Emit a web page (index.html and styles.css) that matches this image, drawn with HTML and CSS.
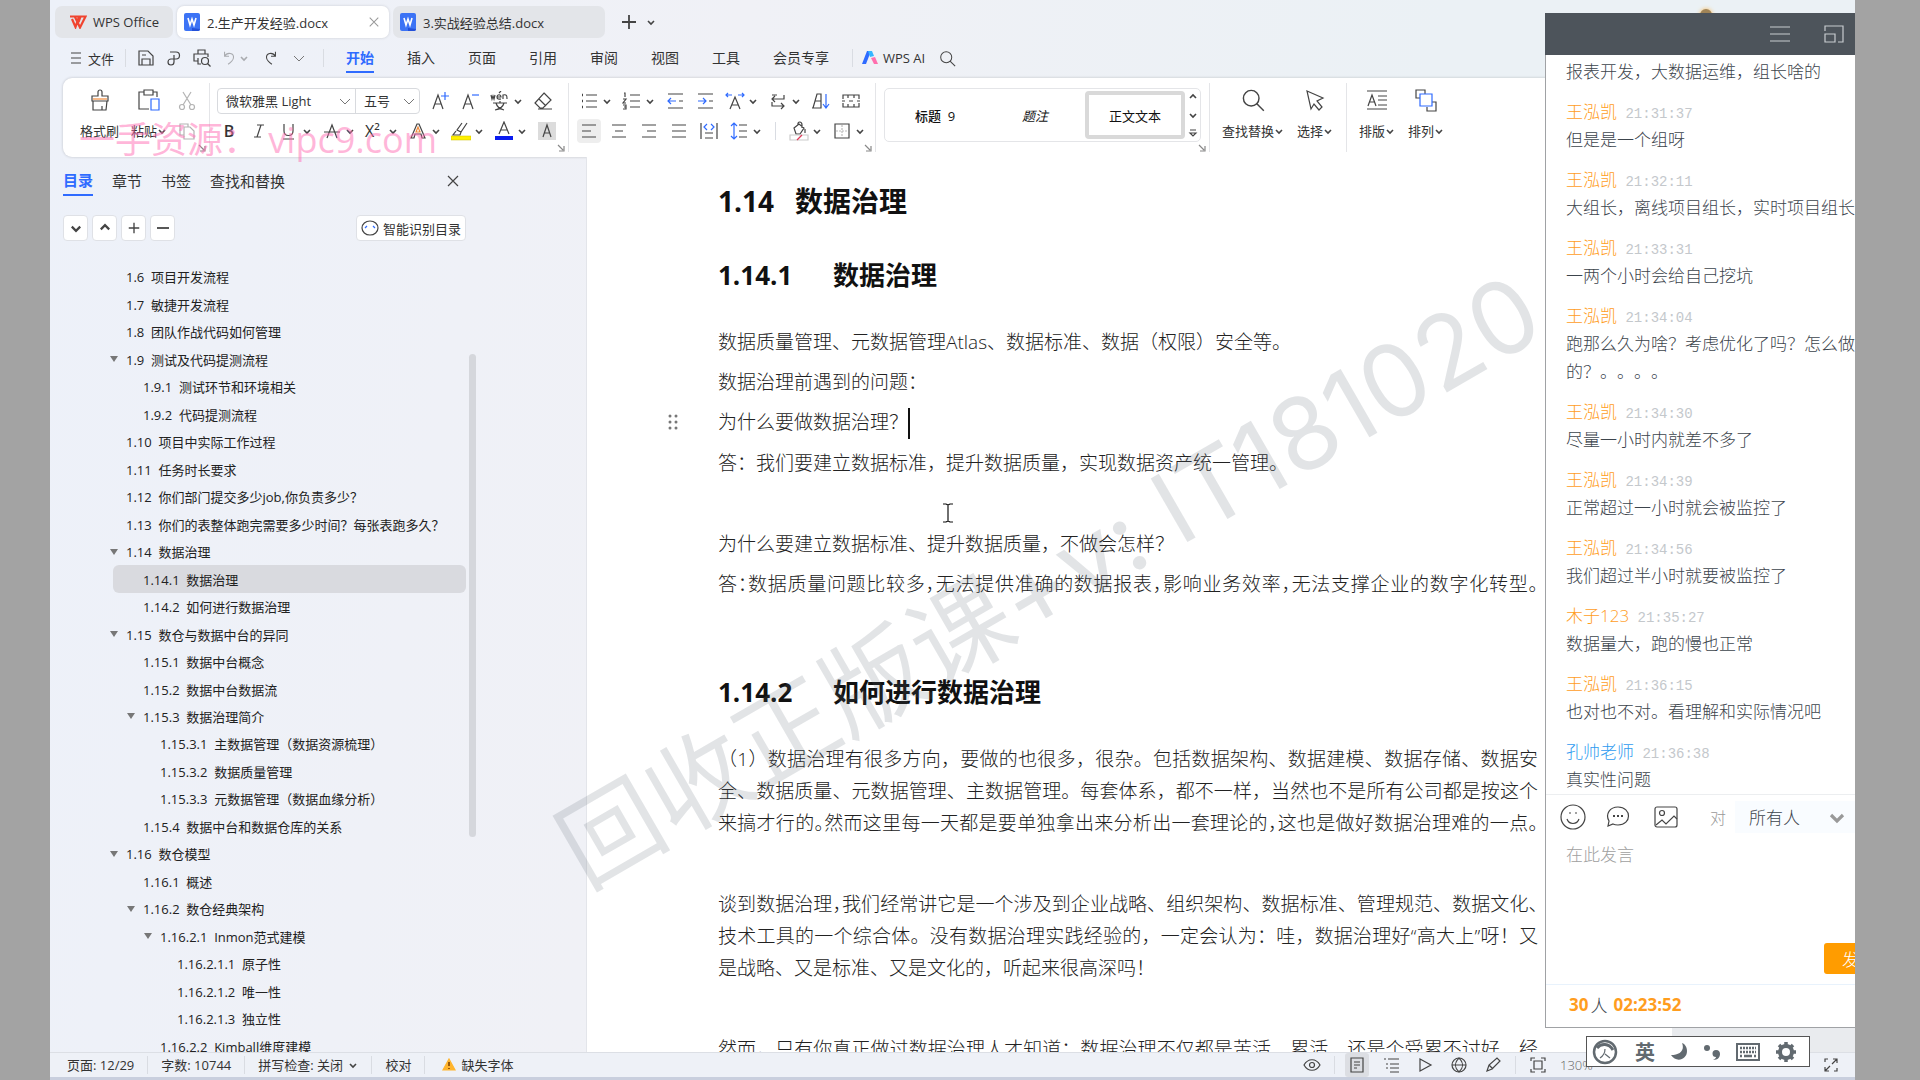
FILE: index.html
```html
<!DOCTYPE html>
<html lang="zh-CN">
<head>
    <meta charset="UTF-8">
    <meta name="viewport" content="width=device-width, initial-scale=1.0">
    <title>2.生产开发经验.docx - WPS Office</title>
    <link rel="stylesheet" href="styles.css">
</head>
<body>
    <svg class="sprite" aria-hidden="true">
        <symbol id="caret" viewBox="0 0 10 10"><path d="M2 4l3 3 3-3" stroke-width="1.6"/></symbol>
        <symbol id="caret-thin" viewBox="0 0 12 12"><path d="M1 4l5 5 5-5" stroke="#777" stroke-width="1"/></symbol>
        <symbol id="corner" viewBox="0 0 8 8"><path d="M1 1l5 5M7 2v5H2" stroke="#888"/></symbol>
        <symbol id="word" viewBox="0 0 18 18"><path d="M3 0h12a2 2 0 0 1 2 2v14a2 2 0 0 1-2 2H3a2 2 0 0 1-2-2V2a2 2 0 0 1 2-2z" fill="#3c73f5" stroke="none"/><path d="M9 18h6a2 2 0 0 0 2-2l-8-1z" fill="#2450d8" stroke="none"/><path d="M5 5l2 7 2-6 2 6 2-7" stroke="#fff" stroke-width="1.6"/></symbol>
        <symbol id="close" viewBox="0 0 14 14"><path d="M2 2l10 10M12 2L2 12"/></symbol>
        <symbol id="plus" viewBox="0 0 16 16"><path d="M8 1v14M1 8h14" stroke-width="1.8"/></symbol>
        <symbol id="search" viewBox="0 0 20 20"><circle cx="8.500" cy="8.500" r="6.500"/><path d="M13 13l6 6"/></symbol>
        <symbol id="lines-left" viewBox="0 0 20 20"><path d="M3 4h14M3 10h9M3 16h14"/></symbol>
        <symbol id="lines-center" viewBox="0 0 20 20"><path d="M3 4h14M6 10h8M3 16h14"/></symbol>
        <symbol id="lines-right" viewBox="0 0 20 20"><path d="M3 4h14M8 10h9M3 16h14"/></symbol>
        <symbol id="lines-full" viewBox="0 0 20 20"><path d="M3 4h14M3 10h14M3 16h14"/></symbol>
    </svg>

    <div class="screen">
        <header class="tabs">
            <button class="tab home">
                <svg width="18" height="14" viewBox="0 0 18 14"><path d="M1 1.500h9L6.500 12 3 4M6 2l5 10.500L16.500 1.500h-5L9.500 7" stroke="#f0442f" stroke-width="2.200"/></svg>
                <span>WPS Office</span>
            </button>
            <button class="tab active">
                <svg width="18" height="18"><use href="#word"/></svg>
                <span>2.生产开发经验.docx</span>
                <svg class="tab-close" width="12" height="12"><use href="#close"/></svg>
            </button>
            <button class="tab">
                <svg width="18" height="18"><use href="#word"/></svg>
                <span>3.实战经验总结.docx</span>
            </button>
            <button class="new-tab" aria-label="新建"><svg width="16" height="16"><use href="#plus"/></svg></button>
            <button class="new-tab" aria-label="更多"><svg width="10" height="10"><use href="#caret"/></svg></button>
        </header>

        <nav class="menubar">
            <button class="file"><svg width="12" height="14" viewBox="0 0 12 14"><path d="M1 2h10M1 7h10M1 12h10"/></svg>文件</button>
            <i class="sep"></i>
            <div class="quick">
                <button aria-label="保存"><svg width="18" height="18" viewBox="0 0 18 18"><path d="M2 2h9l5 5v9H2zM5 16v-6h8v6M5 6h4"/></svg></button>
                <button aria-label="输出"><svg width="18" height="18" viewBox="0 0 18 18"><path d="M5 3h6a3 3 0 0 1 0 7H6a3 3 0 1 0 3 3V6"/></svg></button>
                <button aria-label="打印预览"><svg width="18" height="18" viewBox="0 0 18 18"><path d="M5 5V1h7v4M5 12H1V5h14v3M5 9v6h3"/><circle cx="12" cy="12" r="3.500"/><path d="M14.500 14.500l3 3"/></svg></button>
                <button class="undo" aria-label="撤销"><svg width="16" height="16" viewBox="0 0 18 18"><path d="M4 2v5h5M4 7c3-5 11-4 10 2-.5 3-3 5-6 7"/></svg><svg width="10" height="10"><use href="#caret"/></svg></button>
                <button aria-label="恢复"><svg width="16" height="16" viewBox="0 0 18 18"><path d="M14 2v5H9M14 7C11 2 3 3 4 9c.5 3 3 5 6 7"/></svg></button>
                <button aria-label="更多"><svg width="12" height="12"><use href="#caret-thin"/></svg></button>
            </div>
            <i class="sep"></i>
            <div class="menu">
                <a class="current" href="#">开始</a>
                <a href="#">插入</a>
                <a href="#">页面</a>
                <a href="#">引用</a>
                <a href="#">审阅</a>
                <a href="#">视图</a>
                <a href="#">工具</a>
                <a href="#">会员专享</a>
            </div>
            <i class="sep"></i>
            <a class="ai" href="#">
                <svg width="16" height="14" viewBox="0 0 16 14"><path d="M5 0h4L4 13H0z" fill="#2f6bff" stroke="none"/><path d="M6 0h4l2 5-4 1z" fill="#35b6ff" stroke="none"/><path d="M9 7l4-1 3 7h-4z" fill="#ff6fae" stroke="none"/></svg>
                WPS AI
            </a>
            <button class="find" aria-label="搜索"><svg width="17" height="17"><use href="#search"/></svg></button>
        </nav>

        <section class="ribbon">
            <div class="group clipboard">
                <button class="big">
                    <svg width="22" height="24" viewBox="0 0 22 24"><path d="M9 8V4a2 2 0 0 1 4 0v4h6v5H3V8zM4 13v9h13l1-9M13 22v-4"/><path d="M4 11h14" stroke="#f08a3c"/></svg>
                    格式刷
                </button>
                <button class="big">
                    <svg width="22" height="24" viewBox="0 0 22 24"><path d="M6 4H1v17h10M15 4h4v5M6 2h9v5H6z"/><path d="M13 11h8v11h-8z" stroke="#2f6bff"/></svg>
                    <span>粘贴<svg width="10" height="10"><use href="#caret"/></svg></span>
                </button>
                <div class="stack">
                    <button class="tool muted" aria-label="剪切"><svg width="20" height="20" viewBox="0 0 20 20"><circle cx="5" cy="16" r="2.500"/><circle cx="15" cy="16" r="2.500"/><path d="M6 14l8-13M14 14L6 1"/></svg></button>
                    <button class="tool muted" aria-label="复制"><svg width="20" height="20" viewBox="0 0 20 20"><path d="M7 14H3V3h8v3M7 6h6l4 4v8H7z"/></svg></button>
                </div>
                <svg class="corner" width="8" height="8"><use href="#corner"/></svg>
            </div>

            <div class="group font">
                <div class="row">
                    <div class="combo">
                        <label class="pick family"><select aria-label="字体"><option>微软雅黑 Light</option></select><svg width="12" height="12"><use href="#caret-thin"/></svg></label>
                        <label class="pick size"><select aria-label="字号"><option>五号</option></select><svg width="12" height="12"><use href="#caret-thin"/></svg></label>
                    </div>
                    <button class="tool" aria-label="增大字号"><svg width="20" height="20" viewBox="0 0 20 20"><path d="M3 18L8 4l5 14M5 13h6"/><path d="M15 1v8M11 5h8" stroke="#2f6bff"/></svg></button>
                    <button class="tool" aria-label="减小字号"><svg width="20" height="20" viewBox="0 0 20 20"><path d="M3 18L8 4l5 14M5 13h6"/><path d="M12 4h7" stroke="#2f6bff"/></svg></button>
                    <button class="tool drop" aria-label="拼音指南"><svg width="20" height="20" viewBox="0 0 20 20"><path d="M1 4l1 4 1-3 1 3 1-4M7 6h4c0-3-4-3-4 0 0 3 3 2 4 2M9 2l2-2M13 8V4c4-1 4 1 4 4M3 12h14M10 10v2M6 12c1 4 4 6 8 7M14 12c-1 4-4 6-9 7"/></svg><svg class="c"><use href="#caret"/></svg></button>
                    <button class="tool" aria-label="清除格式"><svg width="20" height="20" viewBox="0 0 20 20"><path d="M11 2l7 7-8 8H7l-5-5zM6 8l7 7M5 18h14"/></svg></button>
                </div>
                <div class="row indent">
                    <button class="tool"><b>B</b></button>
                    <button class="tool" aria-label="斜体"><svg width="20" height="20" viewBox="0 0 20 20"><path d="M8 4h7M5 16h7M12 4L8 16"/></svg></button>
                    <button class="tool drop" aria-label="下划线"><svg width="20" height="20" viewBox="0 0 20 20"><path d="M5 3v7c0 6 9 6 9 0V3M4 18h11"/></svg><svg class="c"><use href="#caret"/></svg></button>
                    <button class="tool drop" aria-label="删除线"><svg width="20" height="20" viewBox="0 0 20 20"><path d="M5 17l5-13 5 13M2 11h16"/></svg><svg class="c"><use href="#caret"/></svg></button>
                    <button class="tool drop"><span>X²</span><svg class="c"><use href="#caret"/></svg></button>
                    <button class="tool drop" aria-label="文字效果"><svg width="20" height="20" viewBox="0 0 20 20"><path d="M3 17L9 3h2l6 14h-3l-1-4H7l-1 4z"/><path d="M8 11l2-5 2 5z" stroke="#f08a3c"/></svg><svg class="c"><use href="#caret"/></svg></button>
                    <button class="tool drop" aria-label="突出显示"><svg width="20" height="20" viewBox="0 0 20 20"><path d="M16 2l-6 9-4-2 5-7M5 10l-3 4h7l1-3"/><path d="M0 15h20v4H0z" fill="#fff000" stroke="#c9bd00" stroke-width=".5"/></svg><svg class="c"><use href="#caret"/></svg></button>
                    <button class="tool drop" aria-label="字体颜色"><svg width="20" height="20" viewBox="0 0 20 20"><path d="M5 13l5-12 5 12M7 9h6"/><path d="M1 15h18v4H1z" fill="#0a1cf0" stroke="none"/></svg><svg class="c"><use href="#caret"/></svg></button>
                    <button class="tool" aria-label="字符底纹"><svg width="20" height="20" viewBox="0 0 20 20"><path d="M1 1h18v18H1z" fill="#dcdcdc" stroke="none"/><path d="M6 16l4-12 4 12M7 12h6"/></svg></button>
                </div>
                <svg class="corner" width="8" height="8"><use href="#corner"/></svg>
            </div>

            <div class="group paragraph">
                <div class="row">
                    <button class="tool drop" aria-label="项目符号"><svg width="20" height="20" viewBox="0 0 20 20"><path d="M3 4h1M3 10h1M3 16h1" stroke-width="2.500"/><path d="M7 4h11M7 10h11M7 16h11"/></svg><svg class="c"><use href="#caret"/></svg></button>
                    <button class="tool drop" aria-label="编号"><svg width="20" height="20" viewBox="0 0 20 20"><path d="M2 2h1v4M1 8h3l-3 4h3M1 14h3v4H1M2 16h2M8 4h10M8 10h10M8 16h10"/></svg><svg class="c"><use href="#caret"/></svg></button>
                    <button class="tool" aria-label="减少缩进"><svg width="20" height="20" viewBox="0 0 20 20"><path d="M3 3h15M3 17h15M14 10h4"/><path d="M11 10H3M6 7l-3 3 3 3" stroke="#2f6bff"/></svg></button>
                    <button class="tool" aria-label="增加缩进"><svg width="20" height="20" viewBox="0 0 20 20"><path d="M3 3h15M3 17h15M14 10h4"/><path d="M3 10h8M8 7l3 3-3 3" stroke="#2f6bff"/></svg></button>
                    <button class="tool drop" aria-label="中文版式"><svg width="20" height="20" viewBox="0 0 20 20"><path d="M5 18l5-12 5 12M7 14h6"/><path d="M1 4h6M3 2L1 4l2 2M13 4h6M17 2l2 2-2 2" stroke="#2f6bff"/></svg><svg class="c"><use href="#caret"/></svg></button>
                    <button class="tool drop" aria-label="换行"><svg width="20" height="20" viewBox="0 0 20 20"><path d="M16 4v4H4M7 5L4 8l3 3M4 11v4h12M13 12l3 3-3 3M4 4h5"/></svg><svg class="c"><use href="#caret"/></svg></button>
                    <button class="tool" aria-label="排序"><svg width="20" height="20" viewBox="0 0 20 20"><path d="M2 17L6 3h4v14H1M4 10h6"/><path d="M15 3v14M12 13l3 4 3-4" stroke="#2f6bff"/></svg></button>
                    <button class="tool" aria-label="制表位"><svg width="20" height="20" viewBox="0 0 20 20"><path d="M2 8V4h16v4M2 12v4h16v-4M7 4v3M13 4v3M7 13v3M13 13v3M1 10h3M8 10h4M16 10h3"/></svg></button>
                </div>
                <div class="row">
                    <button class="tool on" aria-label="左对齐"><svg width="20" height="20"><use href="#lines-left"/></svg></button>
                    <button class="tool" aria-label="居中"><svg width="20" height="20"><use href="#lines-center"/></svg></button>
                    <button class="tool" aria-label="右对齐"><svg width="20" height="20"><use href="#lines-right"/></svg></button>
                    <button class="tool" aria-label="两端对齐"><svg width="20" height="20"><use href="#lines-full"/></svg></button>
                    <button class="tool" aria-label="分散对齐"><svg width="20" height="20" viewBox="0 0 20 20"><path d="M2 2v16M18 2v16M6 12h8M6 17h8"/><path d="M8 3L5 6l3 3M12 3l3 3-3 3" stroke="#2f6bff"/></svg></button>
                    <button class="tool drop" aria-label="行距"><svg width="20" height="20" viewBox="0 0 20 20"><path d="M10 4h8M10 10h8M10 16h8"/><path d="M5 2v16M2 5l3-3 3 3M2 15l3 3 3-3" stroke="#2f6bff"/></svg><svg class="c"><use href="#caret"/></svg></button>
                    <i class="sep"></i>
                    <button class="tool drop" aria-label="底纹"><svg width="20" height="20" viewBox="0 0 20 20"><path d="M5 7l5-4 5 4-4 6H7zM9 4c-1-4 4-4 4 0v3M16 8v4"/><path d="M1 14h18v5H1z" stroke="#ccc"/><path d="M8 19l5-5" stroke="#e03b5a"/></svg><svg class="c"><use href="#caret"/></svg></button>
                    <button class="tool drop" aria-label="边框"><svg width="20" height="20" viewBox="0 0 20 20"><path d="M3 3h14v14H3z"/><path d="M10 4v12M4 10h12" stroke="#bbb" stroke-dasharray="2 1"/></svg><svg class="c"><use href="#caret"/></svg></button>
                </div>
                <svg class="corner" width="8" height="8"><use href="#corner"/></svg>
            </div>

            <div class="group styles">
                <div class="gallery">
                    <button class="style heading">标题&nbsp; 9</button>
                    <button class="style caption">题注</button>
                    <button class="style selected">正文文本</button>
                    <div class="scroller">
                        <button aria-label="上"><svg class="flip" width="10" height="10"><use href="#caret"/></svg></button>
                        <button aria-label="下"><svg width="10" height="10"><use href="#caret"/></svg></button>
                        <button aria-label="展开"><svg width="10" height="10" viewBox="0 0 10 10"><path d="M2 2h6M2 5h6L5 8z"/></svg></button>
                    </div>
                </div>
                <svg class="corner" width="8" height="8"><use href="#corner"/></svg>
            </div>

            <div class="group edit">
                <button class="big"><svg width="24" height="24" viewBox="0 0 20 20"><use href="#search"/></svg><span>查找替换<svg width="10" height="10"><use href="#caret"/></svg></span></button>
                <button class="big"><svg width="24" height="24" viewBox="0 0 24 24"><path d="M4 3l16 7-6 3 5 6-3 3-5-6-3 5z"/></svg><span>选择<svg width="10" height="10"><use href="#caret"/></svg></span></button>
            </div>

            <div class="group arrange">
                <button class="big"><svg width="24" height="24" viewBox="0 0 24 24"><path d="M2 3h20M2 21h20M3 18L7 7l4 11M5 14h5M13 8h9M13 12h9M13 17h9"/></svg><span>排版<svg width="10" height="10"><use href="#caret"/></svg></span></button>
                <button class="big"><svg width="24" height="24" viewBox="0 0 24 24"><path d="M6 10H2V2h9v4M18 14h4v9h-9v-4"/><path d="M6 6h12v12H6z" stroke="#2f6bff"/></svg><span>排列<svg width="10" height="10"><use href="#caret"/></svg></span></button>
            </div>
        </section>

        <main class="workspace">
            <aside class="outline">
                <div class="outline-tabs">
                    <a class="current" href="#">目录</a>
                    <a href="#">章节</a>
                    <a href="#">书签</a>
                    <a href="#">查找和替换</a>
                    <button class="outline-close" aria-label="关闭"><svg width="14" height="14"><use href="#close"/></svg></button>
                </div>
                <div class="outline-tools">
                    <button class="square" aria-label="展开"><svg width="14" height="14"><use href="#caret"/></svg></button>
                    <button class="square" aria-label="收起"><svg class="flip" width="14" height="14"><use href="#caret"/></svg></button>
                    <button class="square" aria-label="增加"><svg width="12" height="12"><use href="#plus"/></svg></button>
                    <button class="square" aria-label="减少"><svg width="14" height="14" viewBox="0 0 14 14"><path d="M1 7h12" stroke-width="1.800"/></svg></button>
                    <button class="smart"><svg width="18" height="16" viewBox="0 0 18 16"><ellipse cx="9" cy="8" rx="8" ry="7"/><path d="M4 8l2-2M12 6l2 2" stroke="#2f6bff"/></svg>智能识别目录</button>
                </div>
                <ul class="tree">
                    <li>1.6&nbsp; 项目开发流程</li>
                    <li>1.7&nbsp; 敏捷开发流程</li>
                    <li>1.8&nbsp; 团队作战代码如何管理</li>
                    <li class="open">1.9&nbsp; 测试及代码提测流程</li>
                    <li class="l2">1.9.1&nbsp; 测试环节和环境相关</li>
                    <li class="l2">1.9.2&nbsp; 代码提测流程</li>
                    <li>1.10&nbsp; 项目中实际工作过程</li>
                    <li>1.11&nbsp; 任务时长要求</li>
                    <li>1.12&nbsp; 你们部门提交多少job,你负责多少？</li>
                    <li>1.13&nbsp; 你们的表整体跑完需要多少时间？每张表跑多久？</li>
                    <li class="open">1.14&nbsp; 数据治理</li>
                    <li class="l2 chosen">1.14.1&nbsp; 数据治理</li>
                    <li class="l2">1.14.2&nbsp; 如何进行数据治理</li>
                    <li class="open">1.15&nbsp; 数仓与数据中台的异同</li>
                    <li class="l2">1.15.1&nbsp; 数据中台概念</li>
                    <li class="l2">1.15.2&nbsp; 数据中台数据流</li>
                    <li class="l2 open">1.15.3&nbsp; 数据治理简介</li>
                    <li class="l3">1.15.3.1&nbsp; 主数据管理（数据资源梳理）</li>
                    <li class="l3">1.15.3.2&nbsp; 数据质量管理</li>
                    <li class="l3">1.15.3.3&nbsp; 元数据管理（数据血缘分析）</li>
                    <li class="l2">1.15.4&nbsp; 数据中台和数据仓库的关系</li>
                    <li class="open">1.16&nbsp; 数仓模型</li>
                    <li class="l2">1.16.1&nbsp; 概述</li>
                    <li class="l2 open">1.16.2&nbsp; 数仓经典架构</li>
                    <li class="l3 open">1.16.2.1&nbsp; Inmon范式建模</li>
                    <li class="l4">1.16.2.1.1&nbsp; 原子性</li>
                    <li class="l4">1.16.2.1.2&nbsp; 唯一性</li>
                    <li class="l4">1.16.2.1.3&nbsp; 独立性</li>
                    <li class="l3">1.16.2.2&nbsp; Kimball维度建模</li>
                </ul>
                <div class="scrollbar"></div>
            </aside>

            <article class="page">
                <h1><span class="no">1.14</span>数据治理</h1>
                <h2><span class="no">1.14.1</span>数据治理</h2>
                <p>数据质量管理、元数据管理Atlas、数据标准、数据（权限）安全等。</p>
                <p>数据治理前遇到的问题：</p>
                <p class="editing">
                    <svg class="handle" width="10" height="16" viewBox="0 0 10 16"><circle cx="2" cy="2" r="1.500"/><circle cx="8" cy="2" r="1.500"/><circle cx="2" cy="8" r="1.500"/><circle cx="8" cy="8" r="1.500"/><circle cx="2" cy="14" r="1.500"/><circle cx="8" cy="14" r="1.500"/></svg>
                    为什么要做数据治理？<i class="text-caret"></i>
                </p>
                <p>答：我们要建立数据标准，提升数据质量，实现数据资产统一管理。</p>
                <p class="blank"><svg class="ibeam" width="12" height="20" viewBox="0 0 12 20"><path d="M1 1h3l2 1 2-1h3M1 19h3l2-1 2 1h3M6 2v16" stroke="#111"/></svg></p>
                <p>为什么要建立数据标准、提升数据质量，不做会怎样？</p>
                <p><span class="full">答<span class="half">：</span>数据质量问题比较多<span class="half">，</span>无法提供准确的数据报表<span class="half">，</span>影响业务效率<span class="half">，</span>无法支撑企业的数字化转型<span class="half">。</span></span></p>
                <h2 class="later"><span class="no">1.14.2</span>如何进行数据治理</h2>
                <p>
                    <span class="full">（1）数据治理有很多方向，要做的也很多，很杂。包括数据架构、数据建模、数据存储、数据安</span>
                    <span class="full">全、数据质量、元数据管理、主数据管理。每套体系，都不一样，当然也不是所有公司都是按这个</span>
                    <span class="full">来搞才行的<span class="half">。</span>然而这里每一天都是要单独拿出来分析出一套理论的<span class="half">，</span>这也是做好数据治理难的一点<span class="half">。</span></span>
                </p>
                <p class="blank"></p>
                <p>
                    <span class="full">谈到数据治理<span class="half">，</span>我们经常讲它是一个涉及到企业战略、组织架构、数据标准、管理规范、数据文化<span class="half">、</span></span>
                    <span class="full">技术工具的一个综合体。没有数据治理实践经验的，一定会认为：哇，数据治理好“高大上”呀！又</span>
                    是战略、又是标准、又是文化的，听起来很高深吗！
                </p>
                <p class="blank"></p>
                <p><span class="full">然而，只有你真正做过数据治理人才知道：数据治理不仅都是苦活、累活、还是个受累不讨好、经</span></p>
            </article>
        </main>

        <footer class="statusbar">
            <span>页面: 12/29</span><i class="sep"></i>
            <span>字数: 10744</span><i class="sep"></i>
            <span>拼写检查: 关闭 <svg class="lang-caret" width="10" height="10"><use href="#caret"/></svg></span><i class="sep"></i>
            <span>校对</span><i class="sep"></i>
            <span class="warn"><svg width="14" height="13" viewBox="0 0 14 13"><path d="M7 1l6 11H1z" fill="#ffb52e" stroke="#ffb52e"/><path d="M7 4v4M7 10v1" stroke="#7a3d00" stroke-width="1.500"/></svg>缺失字体</span>
            <div class="views">
                <button aria-label="护眼"><svg width="18" height="18" viewBox="0 0 18 18"><path d="M1 9c4-7 12-7 16 0-4 7-12 7-16 0z"/><circle cx="9" cy="9" r="2.500"/></svg></button>
                <i class="sep"></i>
                <button class="on" aria-label="页面视图"><svg width="18" height="18" viewBox="0 0 18 18"><path d="M3 2h12v14H3zM6 6h6M6 9h6M6 12h3"/></svg></button>
                <button aria-label="大纲"><svg width="18" height="18" viewBox="0 0 18 18"><path d="M2 3h2M6 3h11M4 8h2M8 8h9M4 12h2M8 12h9M8 16h9"/></svg></button>
                <button aria-label="播放"><svg width="18" height="18" viewBox="0 0 18 18"><path d="M4 3l11 6-11 6z"/></svg></button>
                <button aria-label="网页"><svg width="18" height="18" viewBox="0 0 18 18"><circle cx="9" cy="9" r="7"/><path d="M2 9h14M9 2c-5 5-5 9 0 14M9 2c5 5 5 9 0 14"/></svg></button>
                <button aria-label="书写"><svg width="18" height="18" viewBox="0 0 18 18"><path d="M3 15l2-6 8-7 3 3-8 8zM5 9l4 4"/></svg></button>
                <i class="sep"></i>
                <button aria-label="适应"><svg width="18" height="18" viewBox="0 0 18 18"><path d="M2 5V2h4M12 2h4v3M16 13v3h-4M6 16H2v-3M5 5h8v8H5z"/></svg></button>
                <span class="zoom">130%</span>
                <button class="fullscreen" aria-label="全屏"><svg width="16" height="16" viewBox="0 0 16 16"><path d="M2 5V2h3M9 7l5-5M10 2h4v4M14 11v3h-3M7 9l-5 5M2 10v4h4"/></svg></button>
            </div>
        </footer>

        <div class="watermark">回收正版课+v: IT181020</div>
        <div class="stamp">一手资源： vipc9.com</div>

        <i class="glow"></i>
        <div class="backdrop"></div>
        <section class="chat">
            <header class="chat-head">
                <svg width="20" height="18" viewBox="0 0 20 18"><path d="M0 2h20M0 9h20M0 16h20"/></svg>
                <svg width="20" height="18" viewBox="0 0 20 18"><path d="M1 6V1h18v16h-5M1 9h10v8H1z"/></svg>
            </header>
            <div class="messages">
                <p>报表开发，大数据运维，组长啥的</p>
                <h3>王泓凯 <time>21:31:37</time></h3>
                <p>但是是一个组呀</p>
                <h3>王泓凯 <time>21:32:11</time></h3>
                <p>大组长，离线项目组长，实时项目组长</p>
                <h3>王泓凯 <time>21:33:31</time></h3>
                <p>一两个小时会给自己挖坑</p>
                <h3>王泓凯 <time>21:34:04</time></h3>
                <p>跑那么久为啥？考虑优化了吗？怎么做的？。。。。</p>
                <h3>王泓凯 <time>21:34:30</time></h3>
                <p>尽量一小时内就差不多了</p>
                <h3>王泓凯 <time>21:34:39</time></h3>
                <p>正常超过一小时就会被监控了</p>
                <h3>王泓凯 <time>21:34:56</time></h3>
                <p>我们超过半小时就要被监控了</p>
                <h3>木子123 <time>21:35:27</time></h3>
                <p>数据量大，跑的慢也正常</p>
                <h3>王泓凯 <time>21:36:15</time></h3>
                <p>也对也不对。看理解和实际情况吧</p>
                <h3 class="teacher">孔帅老师 <time>21:36:38</time></h3>
                <p>真实性问题</p>
            </div>
            <div class="chat-tools">
                <button aria-label="表情"><svg width="26" height="26" viewBox="0 0 26 26"><circle cx="13" cy="13" r="12"/><path d="M7 15c2 6 10 6 12 0M9 9h2M15 9h2" /></svg></button>
                <button aria-label="消息"><svg width="24" height="24" viewBox="0 0 24 24"><path d="M12 2c14 0 14 18 0 18-2 0-4-.5-5-1l-5 2 1-5C-1 9 4 2 12 2z"/><path d="M7 11h2M11 11h2M15 11h2" stroke-width="2"/></svg></button>
                <button class="picture" aria-label="图片"><svg width="24" height="24" viewBox="0 0 24 24"><rect x="1" y="2" width="22" height="20" rx="2"/><circle cx="8" cy="8" r="2.500"/><path d="M2 20l6-5 4 4 8-8 3 3"/></svg></button>
                <label class="to" for="target">对</label>
                <div class="target"><select id="target"><option>所有人</option></select><svg width="20" height="20"><use href="#caret"/></svg></div>
            </div>
            <textarea class="say" placeholder="在此发言" aria-label="发言"></textarea>
            <button class="send">发送</button>
            <footer class="chat-foot"><b>30</b><span>人</span><b>02:23:52</b></footer>
        </section>

        <div class="ime">
            <svg width="28" height="26" viewBox="0 0 28 26"><circle cx="13" cy="13" r="11" stroke-width="2.500"/><path d="M5 9c4-5 12-5 16 2" stroke-width="3"/><path d="M8 19c3-2 5-5 5-9M13 15l5 4"/></svg>
            <b>英</b>
            <svg width="18" height="20" viewBox="0 0 18 20"><path d="M12 1c3 7-2 12-11 12 5 8 16 5 16-4 0-4-2-7-5-8z" fill="#626a70" stroke="none"/></svg>
            <svg width="18" height="18" viewBox="0 0 18 18"><circle cx="4" cy="5" r="3" fill="#626a70" stroke="none"/><path d="M13 7a3.500 3.500 0 0 0 0 7c0 1-1 2-3 3 5 0 7-3 7-6 0-2-1-4-4-4z" fill="#626a70" stroke="none"/></svg>
            <svg width="24" height="18" viewBox="0 0 24 18"><path d="M1 1h22v16H1z" stroke-width="2"/><path d="M4 5h16M4 9h16" stroke-width="2.500" stroke-dasharray="2 1"/><path d="M4 13h2M8 13h8M18 13h2" stroke-width="2.500"/></svg>
            <svg width="22" height="22" viewBox="0 0 22 22"><circle cx="11" cy="11" r="6" stroke-width="4"/><path d="M11 1v3M11 18v3M1 11h3M18 11h3M4 4l2 2M16 16l2 2M18 4l-2 2M4 18l2-2" stroke-width="3.500"/></svg>
        </div>
    </div>
</body>
</html>
```
FILE: styles.css
```css
* {
    margin: 0;
    padding: 0;
    box-sizing: border-box;
}

body {
    font-family: "Open Sans", "Noto Sans CJK SC", sans-serif;
    font-size: 13px;
    color: #333;
    background: #a3a3a3;
    height: 100vh;
    overflow: hidden;
}

button, select, textarea {
    font: inherit;
    color: inherit;
    background: none;
    border: none;
    outline: none;
    appearance: none;
}

a {
    color: inherit;
    text-decoration: none;
}

svg {
    fill: none;
    stroke: #444;
    stroke-width: 1.2;
    flex-shrink: 0;
}

.sprite {
    display: none;
}

.screen {
    position: relative;
    display: flex;
    flex-direction: column;
    height: 100vh;
    margin: 0 65px 0 50px;
    overflow: hidden;
    background: linear-gradient(100deg, #edf1f9 0%, #f0f1f6 35%, #ebf1f5 70%);
}

.sep {
    width: 1px;
    height: 18px;
    background: #d9dce2;
}

.flip {
    transform: rotate(180deg);
}

/* tabs */
.tabs {
    display: flex;
    align-items: center;
    gap: 4px;
    padding: 6px 5px 0;
}

.tab {
    display: flex;
    align-items: center;
    gap: 6px;
    width: 212px;
    height: 32px;
    padding: 0 6px;
    border-radius: 7px;
    background: #e3e5e9;
    font-size: 13px;
    white-space: nowrap;
}

.tab.home {
    width: 118px;
    padding: 0 14px;
}

.tab.active {
    background: #fff;
    box-shadow: 0 0 3px rgba(0, 0, 0, 0.15);
}

.tab-close {
    margin-left: auto;
    margin-right: 3px;
    stroke: #999;
}

.new-tab {
    display: flex;
    justify-content: center;
    width: 18px;
}

.tab + .new-tab {
    margin-left: 11px;
}

/* menu */
.menubar {
    display: flex;
    align-items: center;
    height: 40px;
    padding-left: 20px;
}

.file {
    display: flex;
    align-items: center;
    gap: 6px;
    margin-right: 11px;
}

.quick {
    display: flex;
    align-items: center;
    gap: 10px;
    margin: 0 12px 0 11px;
}

.quick button {
    display: flex;
    align-items: center;
    min-width: 18px;
}

.undo {
    gap: 2px;
    margin-right: 4px;
    opacity: 0.4;
}

.quick button:last-child {
    margin-left: 2px;
}

.menu {
    display: flex;
    gap: 33px;
    margin: 0 23px 0 22px;
    font-size: 14px;
    line-height: 28px;
}

.menu .current,
.outline-tabs .current {
    color: #2f6bff;
    font-weight: bold;
    border-bottom: 2px solid #2f6bff;
}

.menu .current {
    height: 29px;
}

.ai {
    display: flex;
    align-items: center;
    gap: 5px;
    margin: 0 14px 0 9px;
}

.find {
    display: flex;
}

/* ribbon */
.ribbon {
    display: flex;
    height: 79px;
    margin-left: 13px;
    background: #fff;
    border-radius: 9px 0 0 9px;
    box-shadow: 0 0 3px rgba(0, 0, 0, 0.2);
    padding: 5px 0;
}

.group {
    position: relative;
    padding-top: 5px;
    border-right: 1px solid #e4e5e8;
    flex-shrink: 0;
}

.corner {
    position: absolute;
    right: 3px;
    bottom: 0;
}

.clipboard {
    display: flex;
    gap: 12px;
    width: 147px;
    padding-left: 17px;
}

.big {
    display: flex;
    flex-direction: column;
    align-items: center;
    justify-content: space-between;
    height: 52px;
    white-space: nowrap;
    line-height: 18px;
}

.stack {
    display: flex;
    flex-direction: column;
    gap: 10px;
    padding-top: 3px;
}

.clipboard .stack {
    margin-left: -2px;
}

.muted {
    opacity: 0.4;
}

.font {
    width: 359px;
    padding-left: 7px;
}

.row {
    display: flex;
    align-items: center;
    gap: 10px;
    height: 26px;
    margin-bottom: 4px;
}

.indent {
    padding-left: 2px;
}

.tool {
    display: flex;
    align-items: center;
    justify-content: center;
    width: 20px;
    height: 20px;
    font-size: 16px;
}

.tool b {
    font-weight: 600;
}

.tool.drop {
    width: 33px;
    justify-content: space-between;
}

.tool .c {
    width: 10px;
    height: 10px;
}

.tool.on {
    background: #eee;
    border-radius: 2px;
    box-shadow: 0 0 0 2px #eee;
}

.combo {
    display: flex;
    width: 203px;
    height: 26px;
    border: 1px solid #d8dade;
    border-radius: 4px;
}

.pick {
    display: flex;
    align-items: center;
    justify-content: space-between;
    padding: 0 4px 0 8px;
}

.family {
    width: 138px;
    border-right: 1px solid #d8dade;
}

.size {
    flex: 1;
}

.paragraph {
    width: 307px;
    padding-left: 10px;
}

.row .sep {
    margin: 0 3px;
}

.styles {
    width: 334px;
    padding-left: 8px;
}

.gallery {
    display: flex;
    align-items: center;
    width: 317px;
    height: 54px;
    border: 1px solid #e4e5e8;
    border-radius: 5px;
}

.style {
    width: 100px;
    height: 48px;
    color: #111;
}

.heading {
    font-weight: 500;
}

.caption {
    font-style: italic;
}

.selected {
    border: 4px solid #d9d9d9;
    border-radius: 4px;
}

.scroller {
    display: flex;
    flex: 1;
    flex-direction: column;
    align-items: center;
    gap: 8px;
}

.scroller button {
    display: flex;
}

.edit,
.arrange {
    display: flex;
    gap: 13px;
    width: 137px;
    padding-left: 12px;
}

.arrange {
    border-right: none;
}

/* workspace */
.workspace {
    display: flex;
    flex: 1;
    min-height: 0;
}

.outline {
    position: relative;
    display: flex;
    flex-direction: column;
    width: 537px;
    padding-left: 13px;
    overflow: hidden;
    border-right: 1px solid #e3e5ea;
}

.outline-tabs {
    display: flex;
    align-items: center;
    gap: 19px;
    width: 403px;
    margin-top: 9px;
    font-size: 15px;
    line-height: 28px;
}

.outline-tabs .current {
    height: 30px;
}

.outline-close {
    display: flex;
    margin: 0 6px 0 auto;
}

.outline-tools {
    display: flex;
    gap: 4px;
    width: 403px;
    margin-top: 19px;
}

.square,
.smart {
    display: flex;
    align-items: center;
    justify-content: center;
    width: 25px;
    height: 26px;
    background: #fff;
    border: 1px solid #dfe1e6;
    border-radius: 4px;
}

.smart {
    gap: 4px;
    width: 110px;
    margin-left: auto;
}

.tree {
    display: flex;
    flex: 1;
    flex-direction: column;
    margin: 22px 0 -8px;
    list-style: none;
    color: #222;
}

.tree li {
    display: flex;
    flex: 1;
    align-items: center;
    width: 353px;
    margin-left: 50px;
    padding-left: 13px;
    white-space: nowrap;
}

.tree .l2 {
    padding-left: 30px;
}

.tree .l3 {
    padding-left: 47px;
}

.tree .l4 {
    padding-left: 64px;
}

.tree .open::before {
    content: "";
    border: 4px solid transparent;
    border-top: 6px solid #777;
    border-bottom: none;
    margin: 0 8px 0 -16px;
}

.tree .chosen {
    background: #d9dadf;
    border-radius: 6px;
}

.scrollbar {
    position: absolute;
    top: 22%;
    left: 419px;
    width: 7px;
    height: 54%;
    border-radius: 4px;
    background: #d5d7dc;
}

.page {
    flex: 1;
    padding: 22px 0 0 131px;
    background: #fff;
    color: #222;
    overflow: hidden;
    font-size: 19px;
    font-weight: 300;
    line-height: 32px;
}

.page h1,
.page h2 {
    display: flex;
    color: #111;
    line-height: 44px;
}

.page h1 {
    font-size: 28px;
    margin-bottom: 30px;
}

.page h2 {
    font-size: 26px;
    margin-bottom: 29px;
}

.page h1 .no {
    width: 77px;
}

.page h2 .no {
    width: 115px;
}

.page .later {
    margin-top: 70px;
}

.page p {
    width: 820px;
    margin-bottom: 8px;
    white-space: nowrap;
}

.full {
    display: block;
    text-align-last: justify;
}

.half {
    font-feature-settings: "halt";
}

.page .blank {
    position: relative;
    height: 33px;
}

.editing {
    position: relative;
}

.handle {
    position: absolute;
    left: -50px;
    top: 8px;
    fill: #777;
    stroke: none;
}

.text-caret {
    display: inline-block;
    width: 2px;
    height: 31px;
    background: #111;
    vertical-align: middle;
}

.ibeam {
    position: absolute;
    left: 224px;
    top: 16px;
}

/* status bar */
.statusbar {
    display: flex;
    align-items: center;
    gap: 13px;
    height: 28px;
    padding: 0 17px 4px;
    border-top: 1px solid #dcdfe5;
    background: #eef1f7;
    box-shadow: inset 0 -3px #c9cfde;
    white-space: nowrap;
}

.lang-caret {
    margin-left: 2px;
}

.warn {
    display: flex;
    align-items: center;
    gap: 5px;
    margin-left: 4px;
}

.views {
    display: flex;
    align-items: center;
    gap: 10px;
    position: absolute;
    left: 1250px;
    right: 16px;
}

.views button {
    display: flex;
    padding: 3px;
}

.views .on {
    background: #dcdee3;
    border-radius: 3px;
}

.zoom {
    color: #666;
    font-weight: 300;
}

.views .fullscreen {
    margin-left: auto;
    padding: 0;
}

/* overlays */
.watermark {
    position: absolute;
    left: 999px;
    top: 580px;
    transform: translate(-50%, -50%) rotate(-30deg);
    font-family: Inter, "Noto Sans CJK SC", sans-serif;
    font-size: 101px;
    line-height: 101px;
    color: rgba(95, 105, 115, 0.18);
    white-space: nowrap;
}

.stamp {
    position: absolute;
    left: 29px;
    top: 116px;
    font-size: 36px;
    line-height: 48px;
    color: rgba(255, 110, 180, 0.5);
    white-space: nowrap;
}

.glow {
    position: absolute;
    right: 143px;
    top: 9px;
    width: 12px;
    height: 12px;
    border-radius: 50%;
    background: #a08457;
    box-shadow: 0 0 4px #ffb84d;
}

.backdrop {
    position: absolute;
    right: 0;
    bottom: 28px;
    width: 183px;
    height: 25px;
    background: #e9ebee;
}

.chat {
    position: absolute;
    top: 13px;
    right: -30px;
    bottom: 52px;
    display: flex;
    flex-direction: column;
    width: 340px;
    background: #fff;
    border: 1px solid #a0a2a5;
    font-size: 17px;
    font-weight: 300;
    color: #3c444c;
}

.chat-head {
    display: flex;
    align-items: center;
    justify-content: flex-end;
    gap: 34px;
    height: 42px;
    margin: -1px;
    padding-right: 41px;
    background: #4d545b;
}

.chat-head svg {
    stroke: #c8ccd0;
}

.messages {
    flex: 1;
    padding: 4px 29px 0 20px;
    line-height: 28px;
    text-spacing-trim: space-all;
    overflow: hidden;
    border-bottom: 1px solid #eceef0;
}

.messages p {
    margin-bottom: 12px;
}

.messages h3 {
    height: 28px;
    font-size: 17px;
    font-weight: 300;
    color: #ff9d1e;
}

.messages .teacher {
    color: #2f9bf0;
}

.messages time {
    margin-left: 4px;
    font-family: "Liberation Mono", monospace;
    font-size: 14px;
    line-height: 20px;
    color: #c4c8cc;
}

.chat-tools {
    display: flex;
    align-items: center;
    gap: 20px;
    height: 44px;
    padding-left: 14px;
}

.chat-tools button {
    display: flex;
}

.chat-tools .picture {
    margin-left: 4px;
}

.to {
    margin: 0 -11px 0 12px;
    color: #999;
    font-size: 16px;
}

.target {
    display: flex;
    align-items: center;
    justify-content: space-between;
    flex: 1;
    height: 32px;
    margin-right: 29px;
    padding: 0 8px 0 14px;
    background: #f9fcff;
}

.target svg {
    stroke: #999;
}

.say {
    height: 104px;
    padding: 4px 20px;
    resize: none;
    line-height: 24px;
}

.say::placeholder {
    color: #a0a0a0;
}

.send {
    align-self: flex-end;
    width: 60px;
    height: 31px;
    padding-left: 10px;
    border-radius: 3px;
    background: #ff9c00;
    color: #fff;
}

.chat-foot {
    display: flex;
    align-items: center;
    height: 43px;
    margin-top: 10px;
    padding: 0 23px 4px;
    border-top: 1px solid #e8f2fc;
    font-size: 17px;
}

.chat-foot b {
    color: #ff9d1e;
    font-weight: 700;
}

.chat-foot span {
    margin: 0 6px 0 2px;
}

.ime {
    position: absolute;
    right: 45px;
    bottom: 13px;
    display: flex;
    align-items: center;
    justify-content: space-between;
    width: 224px;
    height: 31px;
    padding: 0 12px 0 5px;
    border: 1px solid #555;
    background: #fff;
    color: #626a70;
    font-size: 20px;
}

.ime svg {
    stroke: #626a70;
}
```
